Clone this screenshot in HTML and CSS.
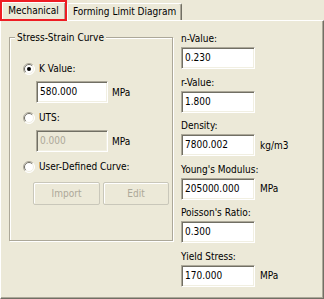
FILE: index.html
```html
<!doctype html>
<html lang="en">
<head>
    <meta charset="UTF-8">
    <title>Material Properties</title>
    <link rel="stylesheet" href="styles.css">
</head>
<body>
    <div class="tabs">
        <div class="tab tab-active">Mechanical</div>
        <div class="tab">Forming Limit Diagram</div>
    </div>
    <div class="panel">
        <fieldset class="group">
            <legend>Stress-Strain Curve</legend>
            <div class="option">
                <svg class="radio" width="12" height="12" viewBox="0 0 12 12">
                    <circle cx="6" cy="6" r="5.5" fill="#fff"/>
                    <path d="M2.1 9.9A5.5 5.5 0 0 1 9.9 2.1" fill="none" stroke="#aca899"/>
                    <path d="M2.8 9.2A4.5 4.5 0 0 1 9.2 2.8" fill="none" stroke="#716f64"/>
                    <path d="M2.1 9.9A5.5 5.5 0 0 0 9.9 2.1" fill="none" stroke="#fff"/>
                    <path d="M2.8 9.2A4.5 4.5 0 0 0 9.2 2.8" fill="none" stroke="#f1efe2"/>
                    <circle cx="6" cy="6" r="2" fill="#000"/>
                </svg>
                <span>K Value:</span>
            </div>
            <div class="field indent">
                <div class="box">580.000</div>
                <span class="unit">MPa</span>
            </div>
            <div class="option">
                <svg class="radio" width="12" height="12" viewBox="0 0 12 12">
                    <circle cx="6" cy="6" r="5.5" fill="#fff"/>
                    <path d="M2.1 9.9A5.5 5.5 0 0 1 9.9 2.1" fill="none" stroke="#aca899"/>
                    <path d="M2.8 9.2A4.5 4.5 0 0 1 9.2 2.8" fill="none" stroke="#716f64"/>
                    <path d="M2.1 9.9A5.5 5.5 0 0 0 9.9 2.1" fill="none" stroke="#fff"/>
                    <path d="M2.8 9.2A4.5 4.5 0 0 0 9.2 2.8" fill="none" stroke="#f1efe2"/>
                </svg>
                <span>UTS:</span>
            </div>
            <div class="field indent">
                <div class="box disabled">0.000</div>
                <span class="unit">MPa</span>
            </div>
            <div class="option">
                <svg class="radio" width="12" height="12" viewBox="0 0 12 12">
                    <circle cx="6" cy="6" r="5.5" fill="#fff"/>
                    <path d="M2.1 9.9A5.5 5.5 0 0 1 9.9 2.1" fill="none" stroke="#aca899"/>
                    <path d="M2.8 9.2A4.5 4.5 0 0 1 9.2 2.8" fill="none" stroke="#716f64"/>
                    <path d="M2.1 9.9A5.5 5.5 0 0 0 9.9 2.1" fill="none" stroke="#fff"/>
                    <path d="M2.8 9.2A4.5 4.5 0 0 0 9.2 2.8" fill="none" stroke="#f1efe2"/>
                </svg>
                <span>User-Defined Curve:</span>
            </div>
            <div class="buttons">
                <div class="btn">Import</div>
                <div class="btn">Edit</div>
            </div>
        </fieldset>

        <div class="props">
            <div class="prop">
                <div class="label">n-Value:</div>
                <div class="field"><div class="box wide">0.230</div></div>
            </div>
            <div class="prop">
                <div class="label">r-Value:</div>
                <div class="field"><div class="box wide">1.800</div></div>
            </div>
            <div class="prop">
                <div class="label">Density:</div>
                <div class="field"><div class="box wide">7800.002</div><span class="unit">kg/m3</span></div>
            </div>
            <div class="prop">
                <div class="label">Young's Modulus:</div>
                <div class="field"><div class="box wide">205000.000</div><span class="unit">MPa</span></div>
            </div>
            <div class="prop">
                <div class="label">Poisson's Ratio:</div>
                <div class="field"><div class="box wide">0.300</div></div>
            </div>
            <div class="prop">
                <div class="label">Yield Stress:</div>
                <div class="field"><div class="box wide">170.000</div><span class="unit">MPa</span></div>
            </div>
        </div>
    </div>
</body>
</html>
```

FILE: styles.css
```css
body {
    margin: 0;
    width: 324px;
    height: 299px;
    overflow: hidden;
    background: #ece9d8;
    font-family: "DejaVu Sans Condensed", "DejaVu Sans", sans-serif;
    font-stretch: condensed;
    font-size: 10px;
    color: #000;
}
.tabs {
    display: flex;
    align-items: flex-end;
    height: 20px;
    position: relative;
    z-index: 1;
}
.tab {
    box-sizing: border-box;
    height: 17px;
    padding: 1px 5px 0;
    line-height: 14px;
    border: 1px solid #fff;
    border-right-color: #716f64;
    border-bottom: 0;
    border-radius: 2px 2px 0 0;
    box-shadow: inset -1px 0 #aca899;
    white-space: nowrap;
}
.tab-active {
    width: 67px;
    height: 21px;
    margin-bottom: -1px;
    padding: 2px 0 0;
    text-align: center;
    line-height: 13px;
    border: 2px solid #ee1d23; /* highlight box around the selected tab */
    border-radius: 0;
    box-shadow: inset 1px 1px #fff, inset -1px 0 #aca899;
    background: #ece9d8;
}
.panel {
    box-sizing: border-box;
    height: 279px;
    display: flex;
    align-items: flex-start;
    padding: 6px 0 0 8px;
    border: 1px solid #fff;
    border-right-color: #716f64;
    border-bottom-color: #716f64;
    box-shadow: inset -1px -1px #aca899;
}
.group {
    box-sizing: border-box;
    width: 164px;
    margin: 4px 8px 0 0;
    padding: 18px 0 35px 13px;
    border: 1px solid #aca899;
    box-shadow: inset 1px 1px #fff, 1px 1px #fff;
}
.group legend {
    margin-left: -8px;
    padding: 0 2px;
    line-height: 13px;
    background: #ece9d8;
}
.option {
    display: flex;
    align-items: center;
    gap: 4px;
    height: 13px;
    margin-top: 8px;
}
.option:first-of-type {
    margin-top: 0;
}
.radio {
    flex: none;
}
.field {
    display: flex;
    align-items: center;
}
.indent {
    margin: 6px 0 0 13px;
}
.box {
    box-sizing: border-box;
    width: 72px;
    height: 22px;
    padding: 1px 3px 0;
    line-height: 18px;
    background: #fff;
    border: 1px solid;
    border-color: #aca899 #fff #fff #aca899;
    box-shadow: inset 1px 1px #716f64, inset -1px -1px #f1efe2;
}
.box.wide {
    width: 74px;
}
.box.disabled {
    background: #ece9d8;
    color: #aca899;
}
.unit {
    margin-left: 4px;
}
.props .unit {
    margin-left: 5px;
}
.buttons {
    display: flex;
    gap: 3px;
    margin: 9px 0 0 10px;
}
.btn {
    box-sizing: border-box;
    width: 67px;
    height: 23px;
    line-height: 21px;
    text-align: center;
    color: #aca899;
    border: 1px solid #c9c7ba;
    border-radius: 2px;
    box-shadow: inset 1px 1px #fff;
}
.btn + .btn {
    width: 66px;
}
.props {
    display: flex;
    flex-direction: column;
    gap: 6.6px;
    margin-top: 5px;
}
.label {
    line-height: 13px;
    margin-bottom: 2px;
}
```
